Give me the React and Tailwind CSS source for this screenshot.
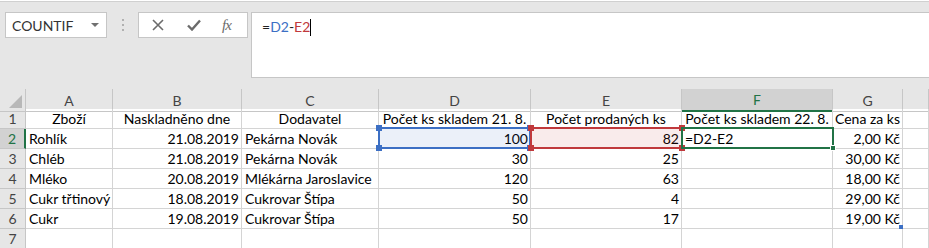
import { memo } from "react";

const COLS = "grid-cols-[26px_87px_129px_137px_152px_151px_151px_70px_1fr]";
const LETTERS = ["A", "B", "C", "D", "E", "F", "G", ""];

const HEAD = [
  "Zboží",
  "Naskladněno dne",
  "Dodavatel",
  "Počet ks skladem 21. 8.",
  "Počet prodaných ks",
  "Počet ks skladem 22. 8.",
  "Cena za ks",
  "",
];

const ROWS = [
  ["Rohlík", "21.08.2019", "Pekárna Novák", "100", "82", "=D2-E2", "2,00 Kč"],
  ["Chléb", "21.08.2019", "Pekárna Novák", "30", "25", "", "30,00 Kč"],
  ["Mléko", "20.08.2019", "Mlékárna Jaroslavice", "120", "63", "", "18,00 Kč"],
  ["Cukr třtinový", "18.08.2019", "Cukrovar Štípa", "50", "4", "", "29,00 Kč"],
  ["Cukr", "19.08.2019", "Cukrovar Štípa", "50", "17", "", "19,00 Kč"],
  ["", "", "", "", "", "", ""],
];

// which columns are right-aligned (index into data row)
const RIGHT = [false, true, false, true, true, false, true];

function FormulaBar() {
  return (
    <div className="h-[88px] bg-[#e6e6e6] border-t border-[#d0d0d0] mt-[1px] relative">
      <div className="flex items-start pt-[10px] pl-[5px]">
        <div className="w-[102px] h-[26px] bg-white border border-[#c6c6c6] flex items-center justify-between pl-[6px] pr-[7px]">
          <span className="text-[14px] text-[#333]">COUNTIF</span>
          <span className="w-0 h-0 border-l-[4px] border-r-[4px] border-t-[4px] border-l-transparent border-r-transparent border-t-[#707070]" />
        </div>
        <div className="w-[31px] h-[26px] flex flex-col items-center justify-center gap-[3px]">
          <span className="w-[2px] h-[2px] bg-[#b0b0b0]" />
          <span className="w-[2px] h-[2px] bg-[#b0b0b0]" />
          <span className="w-[2px] h-[2px] bg-[#b0b0b0]" />
        </div>
        <div className="w-[110px] h-[26px] bg-white border border-[#c6c6c6] flex items-center">
          <svg width="12" height="12" viewBox="0 0 12 12" className="ml-[13px]">
            <path d="M1 1 L11 11 M11 1 L1 11" stroke="#6b6b6b" strokeWidth="1.6" fill="none" />
          </svg>
          <svg width="14" height="12" viewBox="0 0 14 12" className="ml-[23px]">
            <path d="M1 6.5 L5 10.5 L13 1.5" stroke="#6b6b6b" strokeWidth="2.4" fill="none" />
          </svg>
          <span className="ml-[21px] italic text-[15px] text-[#6b6b6b] font-['Liberation_Serif',serif] tracking-[-1px]">fx</span>
        </div>
        <div className="ml-[3px] flex-1 h-[66px] bg-white border border-r-0 border-[#c6c6c6] pl-[10px] pt-[3px] text-[14px]">
          <span className="text-[#222]">=</span>
          <span className="text-[#3c6fc4]">D2</span>
          <span className="text-[#222]">-</span>
          <span className="text-[#c0393c]">E2</span>
          <span className="inline-block w-[1px] h-[17px] bg-black align-middle -mt-[2px]" />
        </div>
      </div>
    </div>
  );
}

function ColumnHeader() {
  return (
    <div className={`grid ${COLS} h-[20px] bg-[#e6e6e6]`}>
      <div className="relative border-r border-b border-[#c6c6c6] bg-[#e6e6e6]">
        <span className="absolute right-[3px] bottom-[3px] w-0 h-0 border-b-[13px] border-l-[13px] border-b-[#b8b8b8] border-l-transparent" />
      </div>
      {LETTERS.map((l, i) => (
        <div
          key={i}
          className={
            l === "F"
              ? "flex items-center justify-center border-r border-[#c6c6c6] bg-[#d2d2d2] border-b-2 border-b-[#217346] text-[#217346] text-[14px]"
              : "flex items-center justify-center border-r border-b border-[#c6c6c6] text-[#444] text-[14px]"
          }
        >
          {l}
        </div>
      ))}
    </div>
  );
}

function Cell({ children, right, center }) {
  return (
    <div
      className={
        "h-[20px] border-r border-b border-[#d4d4d4] px-[3px] flex items-center whitespace-nowrap overflow-visible text-[14px] text-black " +
        (center ? "justify-center" : right ? "justify-end pr-[2px]" : "justify-start")
      }
    >
      {children}
    </div>
  );
}

function RowHead({ n, active }) {
  return (
    <div
      className={
        active
          ? "h-[20px] bg-[#d2d2d2] border-b border-[#c6c6c6] border-r-2 border-r-[#217346] flex items-center justify-center text-[14px] text-[#217346]"
          : "h-[20px] bg-[#e6e6e6] border-r border-b border-[#c6c6c6] flex items-center justify-center text-[14px] text-[#444]"
      }
    >
      {n}
    </div>
  );
}

function Handle({ className }) {
  return <span className={"absolute w-[6px] h-[6px] " + className} />;
}

function Row({ r, n }) {
  return (
    <>
      <RowHead n={n} active={n === 2} />
      {r.map((v, i) => (
        <Cell key={i} right={RIGHT[i]}>
          {v}
        </Cell>
      ))}
      <Cell />
    </>
  );
}

function Sheet() {
  return (
    <div className="relative">
      <ColumnHeader />
      <div className={`grid ${COLS}`}>
        <RowHead n={1} />
        {HEAD.map((h, i) => (
          <Cell key={i} center>
            {h}
          </Cell>
        ))}
        {ROWS.map((r, ri) => (
          <Row key={ri} r={r} n={ri + 2} />
        ))}
      </div>

      {/* reference highlights on D2, E2 and active cell F2 */}
      <div className="absolute left-[378px] top-[38px] w-[153px] h-[22px] border-2 border-[#3c6fc4] bg-[#3c6fc4]/10 pointer-events-none">
        <Handle className="-left-[4px] -top-[4px] bg-[#3c6fc4]" />
        <Handle className="-right-[4px] -top-[4px] bg-[#3c6fc4]" />
        <Handle className="-left-[4px] -bottom-[4px] bg-[#3c6fc4]" />
        <Handle className="-right-[4px] -bottom-[4px] bg-[#3c6fc4]" />
      </div>
      <div className="absolute left-[530px] top-[38px] w-[153px] h-[22px] border-2 border-[#c0393c] bg-[#c0393c]/10 pointer-events-none">
        <Handle className="-left-[4px] -top-[4px] bg-[#c0393c]" />
        <Handle className="-right-[4px] -top-[4px] bg-[#c0393c]" />
        <Handle className="-left-[4px] -bottom-[4px] bg-[#c0393c]" />
        <Handle className="-right-[4px] -bottom-[4px] bg-[#c0393c]" />
      </div>
      <div className="absolute left-[681px] top-[38px] w-[153px] h-[22px] border-2 border-[#217346] pointer-events-none">
        <Handle className="-right-[4px] -bottom-[4px] bg-[#217346] border border-white" />
      </div>
      <span className="absolute left-[899px] top-[136px] w-[4px] h-[4px] bg-[#3c6fc4]" />
    </div>
  );
}

function AppMemo() {
  return (
    <div className="w-[929px] h-[248px] overflow-hidden bg-white font-['Lato',sans-serif]">
      <FormulaBar />
      <Sheet />
    </div>
  );
}

const App = memo(AppMemo);
export default App;
